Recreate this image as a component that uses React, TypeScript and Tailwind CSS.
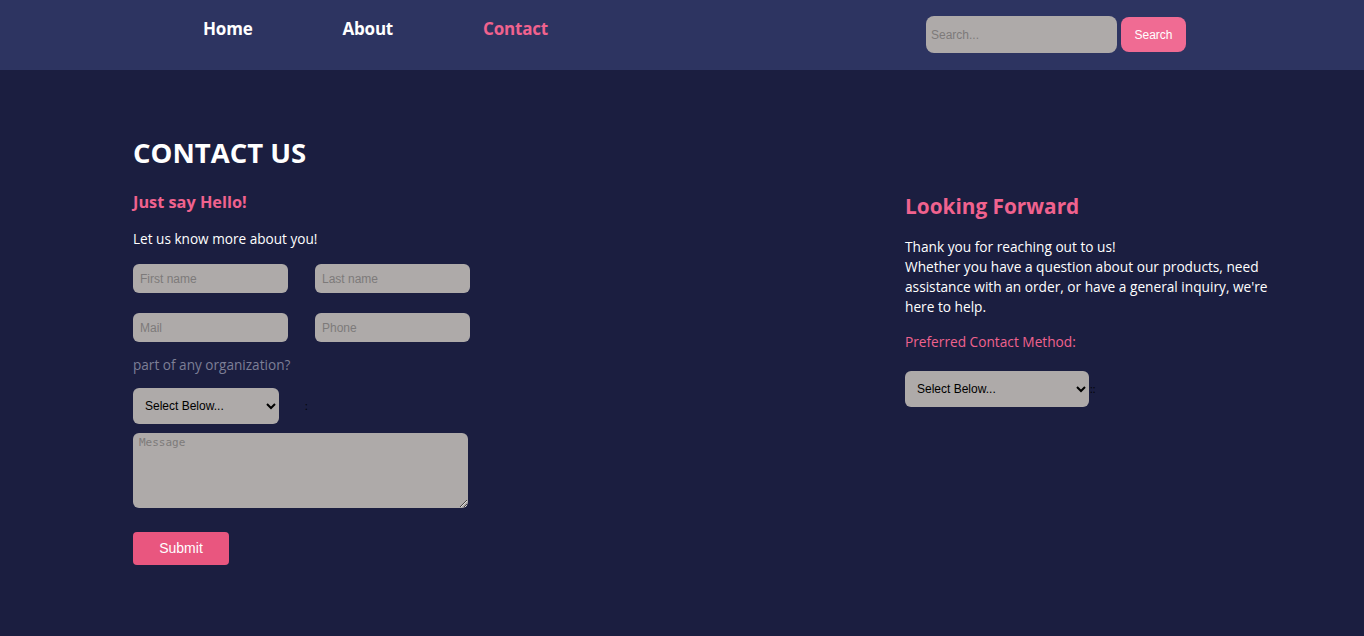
import React from "react";

export default function App() {
  return (
    <div className="min-h-[636px] bg-[#1b1e40] font-['Open_Sans',sans-serif] text-white">
      {/* nav */}
      <nav className="h-[70px] bg-[#2d3461] flex items-start">
        <ul className="flex gap-[90px] pl-[203px] pt-[16px] text-[17px] font-bold tracking-[-0.2px]">
          <li>Home</li>
          <li>About</li>
          <li className="text-[#f0628e]">Contact</li>
        </ul>
        <div className="ml-auto mr-[178px] mt-[16px] flex items-center gap-[4px] font-['Liberation_Sans',Arial,sans-serif]">
          <input
            placeholder="Search..."
            className="w-[191px] h-[37px] rounded-[8px] bg-[#aeaaa9] px-[5px] text-[12px] text-black placeholder:text-[#7d7a7a] outline-none"
          />
          <button className="w-[65px] h-[35px] rounded-[8px] bg-[#f06b93] text-[12px] text-white">
            Search
          </button>
        </div>
      </nav>

      <main className="flex pl-[133px] pt-[65px]">
        {/* left column */}
        <section className="w-[772px]">
          <h1 className="text-[27.5px] font-bold leading-[36px]">CONTACT US</h1>
          <h2 className="mt-[19px] text-[16.3px] font-bold text-[#f0628e] leading-[24px]">Just say Hello!</h2>
          <p className="mt-[15px] text-[13.6px] leading-[20px]">Let us know more about you!</p>

          <div className="mt-[15px] grid grid-cols-[155px_155px] gap-x-[27px] gap-y-[20px] font-['Liberation_Sans',Arial,sans-serif]">
            <input placeholder="First name" className="h-[29px] rounded-[6px] bg-[#aeaaa9] px-[7px] text-[12px] placeholder:text-[#7d7a7a] outline-none" />
            <input placeholder="Last name" className="h-[29px] rounded-[6px] bg-[#aeaaa9] px-[7px] text-[12px] placeholder:text-[#7d7a7a] outline-none" />
            <input placeholder="Mail" className="h-[29px] rounded-[6px] bg-[#aeaaa9] px-[7px] text-[12px] placeholder:text-[#7d7a7a] outline-none" />
            <input placeholder="Phone" className="h-[29px] rounded-[6px] bg-[#aeaaa9] px-[7px] text-[12px] placeholder:text-[#7d7a7a] outline-none" />
          </div>

          <p className="mt-[13px] text-[13.6px] leading-[20px] text-[#7d7f96]">part of any organization?</p>

          <div className="mt-[13px] flex items-center">
            <select className="w-[146px] h-[36px] rounded-[6px] bg-[#aeaaa9] pl-[8px] pr-[2px] text-[12px] text-black font-['Liberation_Sans',Arial,sans-serif] outline-none">
              <option>Select Below...</option>
            </select>
            <span className="ml-[26px] text-[10px] leading-none text-black">:</span>
          </div>

          <textarea
            placeholder="Message"
            className="mt-[9px] block w-[335px] h-[75px] rounded-[6px] bg-[#aeaaa9] px-[6px] py-[2px] text-[11px] font-['DejaVu_Sans_Mono',monospace] placeholder:text-[#7d7a7a] outline-none"
          />

          <button className="mt-[24px] w-[96px] h-[33px] rounded-[4px] bg-[#e9567f] text-[14px] text-white font-['Liberation_Sans',Arial,sans-serif]">
            Submit
          </button>
        </section>

        {/* right column */}
        <section className="w-[380px] pt-[56px]">
          <h2 className="text-[20.8px] font-bold text-[#f0628e] leading-[30px]">Looking Forward</h2>
          <p className="mt-[16px] text-[13.7px] leading-[20px] w-[380px]">
            Thank you for reaching out to us!
            <br />
            Whether you have a question about our products, need assistance with an order, or have a general inquiry, we're here to help.
          </p>
          <p className="mt-[15px] text-[13.7px] leading-[20px] text-[#f0628e]">Preferred Contact Method:</p>
          <div className="mt-[19px] flex items-center">
            <select className="w-[184px] h-[36px] rounded-[6px] bg-[#aeaaa9] pl-[8px] pr-[2px] text-[12px] text-black font-['Liberation_Sans',Arial,sans-serif] outline-none">
              <option>Select Below...</option>
            </select>
            <span className="ml-[1px] text-[10px] leading-none text-black">::</span>
          </div>
        </section>
      </main>
    </div>
  );
}
